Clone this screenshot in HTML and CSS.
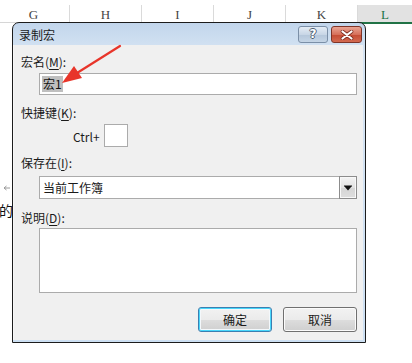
FILE: index.html
```html
<!DOCTYPE html>
<html lang="zh-CN">
<head>
<meta charset="utf-8">
<title>录制宏</title>
<link rel="stylesheet" href="styles.css">
</head>
<body>
<div class="sheet">
  <div class="col-headers">
    <div class="col">G</div>
    <div class="col">H</div>
    <div class="col">I</div>
    <div class="col">J</div>
    <div class="col">K</div>
    <div class="col selected">L</div>
  </div>
  <div class="cells">
    <div class="cell-arrow"><svg width="8" height="6" viewBox="0 0 8 6"><path d="M1 3H7M1 3L3.5 1M1 3L3.5 5" stroke="#9a9a9a" stroke-width="1" fill="none"/></svg></div>
    <div class="cell-text">的</div>
  </div>
</div>

<div class="dialog">
  <div class="titlebar">
    <span class="title">录制宏</span>
    <div class="title-buttons">
      <div class="tb-btn help">?</div>
      <div class="tb-btn close"><svg width="14" height="10" viewBox="0 0 14 10"><path d="M2.5 1.5L11.5 8.5M11.5 1.5L2.5 8.5" stroke="#7a2a1e" stroke-width="3.6" stroke-linecap="round"/><path d="M2.5 1.5L11.5 8.5M11.5 1.5L2.5 8.5" stroke="#ffffff" stroke-width="2.2" stroke-linecap="round"/></svg></div>
    </div>
  </div>
  <div class="client">
    <div class="label lbl-name">宏名(<u>M</u>):</div>
    <div class="field input"><span class="sel">宏1</span></div>
    <div class="label lbl-key">快捷键(<u>K</u>):</div>
    <div class="ctrl-row">
      <span class="ctrl">Ctrl+</span>
      <div class="keybox"></div>
    </div>
    <div class="label lbl-store">保存在(<u>I</u>):</div>
    <div class="field select">
      <span class="sel-text">当前工作簿</span>
      <div class="drop"><svg width="8" height="6" viewBox="0 0 8 6"><path d="M0 0.5H8V1.5H0Z M0.5 1.5H7.5L4 5.5Z" fill="#111"/></svg></div>
    </div>
    <div class="label lbl-desc">说明(<u>D</u>):</div>
    <div class="field textarea"></div>
    <div class="buttons">
      <div class="btn default">确定</div>
      <div class="btn">取消</div>
    </div>
  </div>
  <svg class="annot" width="120" height="70" viewBox="0 0 120 70">
    <path d="M107 23L64 50" stroke="#e8352a" stroke-width="2.2" stroke-linecap="round"/>
    <path d="M49 60L61 43L69 55Z" fill="#e8352a"/>
  </svg>
</div>
</body>
</html>
```

FILE: styles.css
```css
* { box-sizing: border-box; }
html, body { margin: 0; padding: 0; }
body {
  width: 412px;
  height: 363px;
  overflow: hidden;
  background: #ffffff;
  position: relative;
  font-family: "Noto Sans CJK SC", "Noto Sans", sans-serif;
}

.sheet { width: 412px; }
.col-headers {
  display: flex;
  margin-top: 5px;
  margin-left: -2px;
  height: 18px;
  border-bottom: 1px solid #d6d6d6;
}
.col {
  width: 72px;
  flex: none;
  height: 17px;
  border-right: 1px solid #dadada;
  text-align: center;
  font-family: "Liberation Serif", "DejaVu Serif", serif;
  font-size: 13px;
  line-height: 17px;
  color: #444;
  padding-top: 1px;
}
.col.selected {
  background: #e2e2e2;
  color: #217346;
  border-right: none;
  flex: 1;
  height: 19px;
  border-bottom: 2px solid #217346;
}
.cells { padding-top: 158px; }
.cell-arrow { height: 10px; padding-left: 3px; line-height: 6px; }
.cell-text {
  margin-top: 11px;
  font-size: 14px;
  line-height: 16px;
  color: #111;
  margin-left: -1px;
}

.dialog {
  position: absolute;
  left: 12px;
  top: 22px;
  width: 354px;
  height: 321px;
  border: 1px solid #1c1c1c;
  border-radius: 7px 7px 0 0;
  background: linear-gradient(#c2d6ec, #d6e4f3 30px, #cde0f3);
  display: flex;
  flex-direction: column;
}
.titlebar {
  height: 22px;
  flex: none;
  display: flex;
  align-items: center;
  justify-content: space-between;
  padding-left: 6px;
  padding-right: 3px;
  border-radius: 6px 6px 0 0;
}
.title {
  font-size: 12px;
  color: #1a1a1a;
  line-height: 16px;
  margin-top: 1px;
}
.title-buttons { display: flex; gap: 3px; align-self: flex-start; margin-top: 3px; }
.tb-btn {
  height: 17px;
  border-radius: 3px;
  display: flex;
  align-items: center;
  justify-content: center;
}
.help {
  width: 30px;
  background: linear-gradient(#e4ecf5, #c8d6e6 50%, #b4c6da 51%, #c5d5e6);
  border: 1px solid #7b8fa7;
  font-family: "DejaVu Sans", sans-serif;
  font-weight: bold;
  font-size: 12px;
  color: #ffffff;
  text-shadow: 1px 0 0 #4f5f73, -1px 0 0 #4f5f73, 0 1px 0 #4f5f73, 0 -1px 0 #4f5f73;
  line-height: 15px;
}
.close {
  width: 31px;
  background: linear-gradient(#e9a493, #d6705b 50%, #c44a33 51%, #d36a50);
  border: 1px solid #7e3427;
}

.client {
  flex: 1;
  background: #f0f0f0;
  margin: 0 2px 2px 0;
  border-left: 1px solid #f7f7f7;
  padding: 9px 6px 0 7px;
  display: flex;
  flex-direction: column;
  font-size: 12px;
  color: #1a1a1a;
}
.label { line-height: 16px; height: 16px; }
.label u { text-decoration: underline; text-underline-offset: 2px; }
.field {
  margin-left: 18px;
  background: #ffffff;
  border: 1px solid #ababab;
}
.input {
  margin-top: 3px;
  height: 22px;
  padding: 2px 0 0 2px;
  display: flex;
  align-items: flex-start;
}
.sel {
  background: #bfbfbf;
  line-height: 16px;
  height: 16px;
  padding: 0 1px;
  color: #111;
}
.lbl-key { margin-top: 10px; }
.ctrl-row {
  display: flex;
  align-items: center;
  margin-top: 3px;
  padding-left: 52px;
  gap: 4px;
}
.ctrl { line-height: 16px; margin-top: 3px; }
.keybox {
  width: 24px;
  height: 23px;
  background: #ffffff;
  border: 1px solid #ababab;
}
.lbl-store { margin-top: 8px; }
.select {
  margin-top: 5px;
  height: 23px;
  display: flex;
  align-items: center;
  justify-content: space-between;
  padding-left: 3px;
}
.sel-text { line-height: 16px; }
.drop {
  width: 18px;
  height: 23px;
  margin: -1px -1px -1px 0;
  border: 1px solid #8c8c8c;
  background: linear-gradient(#f4f4f4, #e2e2e2 50%, #d5d5d5 51%, #dedede);
  box-shadow: inset 0 0 0 1px #f8f8f8;
  display: flex;
  align-items: center;
  justify-content: center;
}
.lbl-desc { margin-top: 11px; }
.textarea { margin-top: 2px; height: 65px; }
.buttons {
  display: flex;
  justify-content: flex-end;
  gap: 11px;
  margin-top: 14px;
}
.btn {
  width: 74px;
  height: 25px;
  border: 1px solid #707070;
  border-radius: 3px;
  background: linear-gradient(#f2f2f2, #ebebeb 50%, #dddddd 51%, #cfcfcf);
  box-shadow: inset 0 0 0 1px #fbfbfb;
  display: flex;
  align-items: center;
  justify-content: center;
  line-height: 16px;
}
.btn.default {
  border-color: #3c7fb1;
  box-shadow: inset 0 0 0 1px #48d7fb, inset 0 0 0 2px #f4f8fb;
}

.annot {
  position: absolute;
  left: 0;
  top: 0;
  pointer-events: none;
}
```
